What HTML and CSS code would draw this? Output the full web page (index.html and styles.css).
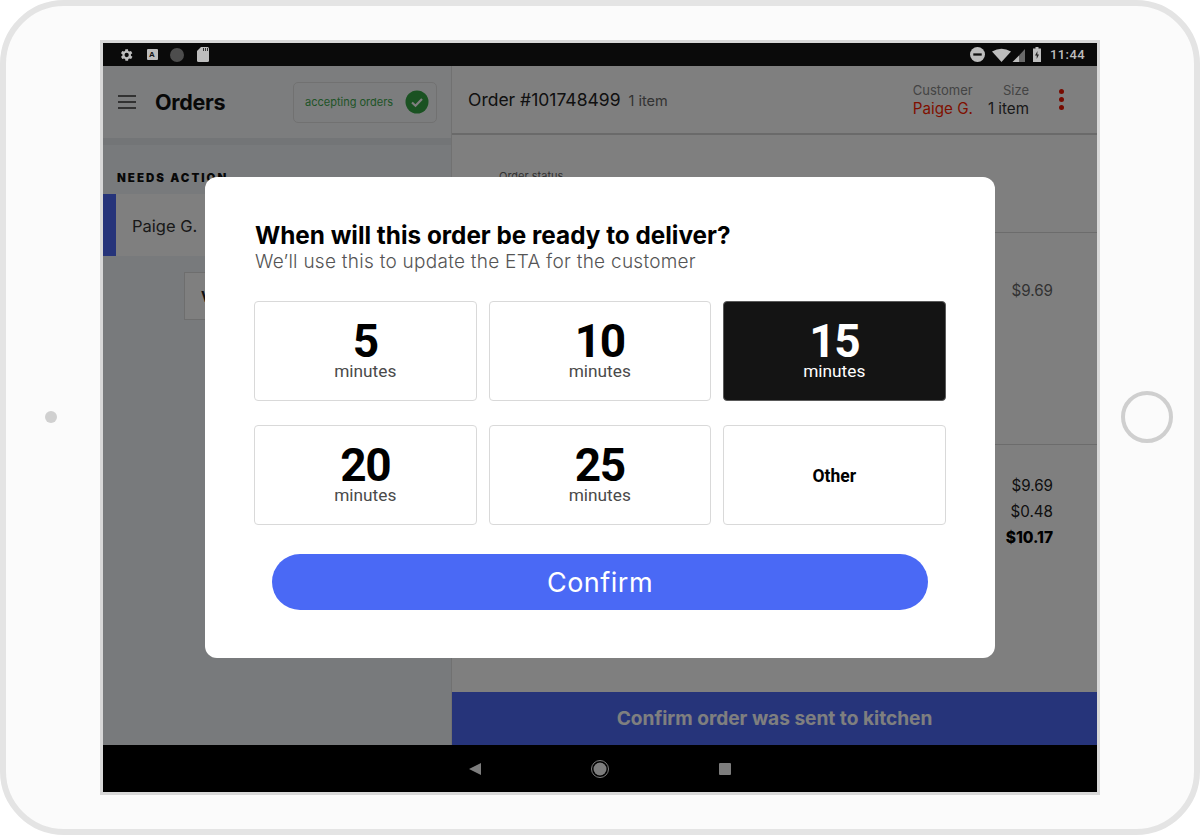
FILE: index.html
```html
<!DOCTYPE html>
<html lang="en">
<head>
<meta charset="utf-8">
<title>Orders</title>
<link rel="stylesheet" href="styles.css">
</head>
<body>
<div class="device">
  <div class="bezel"><span class="camera"></span></div>
  <div class="screen">
    <div class="statusbar">
      <div class="status-left">
        <svg class="si" width="16" height="16" viewBox="0 0 24 24"><path fill="#bdbdbd" d="M19.4 13a7.5 7.5 0 0 0 0-2l2.1-1.6-2-3.5-2.5 1a7.5 7.5 0 0 0-1.7-1L15 3.300h-4l-.4 2.600a7.500 7.500 0 0 0-1.700 1l-2.500-1-2 3.500L6.600 11a7.500 7.500 0 0 0 0 2l-2.100 1.600 2 3.500 2.500-1a7.500 7.500 0 0 0 1.700 1l.4 2.600h4l.4-2.600a7.500 7.500 0 0 0 1.700-1l2.500 1 2-3.500zM13 15.200a3.200 3.200 0 1 1 0-6.400 3.200 3.200 0 0 1 0 6.400z"/></svg>
        <span class="a-icon">A</span>
        <span class="dot-icon"></span>
        <svg class="si" width="12" height="15" viewBox="0 0 12 15"><path fill="#bdbdbd" d="M4 0h6.500A1.500 1.500 0 0 1 12 1.500v12a1.500 1.500 0 0 1-1.500 1.500h-9A1.500 1.500 0 0 1 0 13.500V4z"/><path fill="#333" d="M6 1h1v3H6zM8 1h1v3H8zM10 1h1v3h-1z"/></svg>
      </div>
      <div class="status-right">
        <svg width="15" height="15" viewBox="0 0 16 16"><circle cx="8" cy="8" r="8" fill="#bdbdbd"/><rect x="3.500" y="6.800" width="9" height="2.400" fill="#111"/></svg>
        <svg width="33" height="14" viewBox="0 0 33 14"><path fill="#bdbdbd" d="M0 3.500Q9.500-2 19 3.500L9.500 14z"/><path fill="#bdbdbd" d="M27 7.500V14H20.500z"/><path fill="#6a6a6a" d="M33 1v13h-6V7.500z"/></svg>
        <svg class="battery" width="8" height="15" viewBox="0 0 8 15"><path fill="#bdbdbd" d="M2.500 0h3v1.500H8V15H0V1.500h2.500z"/><path fill="#222" d="M4.500 4 2 8.500h1.700V12L6 7.500H4.300z"/></svg>
        <span class="clock">11:44</span>
      </div>
    </div>
    <div class="app">
      <aside class="side">
        <div class="side-head">
          <svg class="menu" width="18" height="14" viewBox="0 0 18 14"><path d="M0 1h18M0 7h18M0 13h18" stroke="#333" stroke-width="1.500"/></svg>
          <h1 class="orders">Orders</h1>
          <div class="accepting">
            <span class="accepting-text">accepting orders</span>
            <svg width="24" height="24" viewBox="0 0 24 24"><circle cx="12" cy="12" r="11.500" fill="#34a544"/><path d="M7 12.500l3.500 3.200L17 9" fill="none" stroke="#fff" stroke-width="2.200"/></svg>
          </div>
        </div>
        <div class="side-rule"></div>
        <div class="section-label">NEEDS ACTION</div>
        <div class="order-row">Paige G.</div>
        <div class="view-btn">View</div>
      </aside>
      <main class="detail">
        <header class="detail-head">
          <div class="order-title"><span class="order-no">Order #101748499</span><span class="order-count">1 item</span></div>
          <div class="meta">
            <div class="meta-col"><span class="meta-label">Customer</span><span class="meta-name">Paige G.</span></div>
            <div class="meta-col meta-end"><span class="meta-label">Size</span><span class="meta-value">1 item</span></div>
          </div>
          <div class="kebab"><i></i><i></i><i></i></div>
        </header>
        <div class="detail-body">
          <div class="status-label">Order status</div>
          <div class="line-row line-first"><span>$9.69</span></div>
          <div class="totals">
            <span>$9.69</span>
            <span>$0.48</span>
            <strong>$10.17</strong>
          </div>
        </div>
        <div class="confirm-bar">Confirm order was sent to kitchen</div>
      </main>
      <div class="scrim"></div>
      <section class="modal">
        <h2 class="modal-title">When will this order be ready to deliver?</h2>
        <p class="modal-sub">We’ll use this to update the ETA for the customer</p>
        <div class="choices">
          <button class="choice"><b>5</b><span>minutes</span></button>
          <button class="choice"><b>10</b><span>minutes</span></button>
          <button class="choice selected"><b>15</b><span>minutes</span></button>
          <button class="choice"><b>20</b><span>minutes</span></button>
          <button class="choice"><b>25</b><span>minutes</span></button>
          <button class="choice other">Other</button>
        </div>
        <button class="confirm">Confirm</button>
      </section>
    </div>
    <div class="navbar">
      <svg width="12" height="12" viewBox="0 0 12 12"><path fill="#7d7d7d" d="M12 0v12L0 6z"/></svg>
      <svg width="18" height="18" viewBox="0 0 18 18"><circle cx="9" cy="9" r="8.500" fill="none" stroke="#7d7d7d"/><circle cx="9" cy="9" r="6.500" fill="#7d7d7d"/></svg>
      <span class="nav-square"></span>
    </div>
  </div>
  <div class="bezel"><span class="home"></span></div>
</div>
</body>
</html>
```
FILE: styles.css
```css
* { box-sizing: border-box; }
html, body { margin: 0; padding: 0; }
body { width: 1200px; height: 835px; overflow: hidden; background: #fff; font-family: "Inter", "Liberation Sans", sans-serif; }
.device { width: 1200px; height: 835px; background: #fbfbfb; border: 6px solid #e4e4e4; border-radius: 64px; display: flex; align-items: center; }
.bezel { flex: 1; display: flex; align-items: center; justify-content: center; }
.camera { width: 12px; height: 12px; border-radius: 50%; background: #d0d0d0; margin: 0 4px 1px 0; }
.home { width: 52px; height: 52px; border-radius: 50%; border: 4px solid #cfcfcf; margin-bottom: 1px; }
.screen { width: 1000px; height: 755px; border: 3px solid #d8d8d8; display: flex; flex-direction: column; background: #000; }
.statusbar { height: 23px; background: #0a0a0a; display: flex; justify-content: space-between; align-items: center; padding: 0 12px 0 15px; flex: none; }
.status-left { display: flex; align-items: center; gap: 12.500px; }
.status-right { display: flex; align-items: center; gap: 7px; }
.battery { margin: 0 2px 0 1px; }
.a-icon { width: 11px; height: 11px; background: #bdbdbd; color: #111; font: bold 8px/11px "Liberation Sans", sans-serif; text-align: center; border-radius: 1px; }
.dot-icon { width: 14px; height: 14px; border-radius: 50%; background: #4d4d4d; }
.clock { color: #bdbdbd; font: 500 13px "Roboto", sans-serif; letter-spacing: .4px; }
.app { position: relative; flex: 1; display: flex; background: #fff; min-height: 0; }
.scrim { position: absolute; inset: 0; background: rgba(0,0,0,.5); }
.side { width: 349px; flex: none; background: #f1f5f9; border-right: 1px solid #e2e2e2; }
.side-head { height: 72px; display: flex; align-items: center; padding-left: 15px; background: #f8fafc; }
.menu { flex: none; }
.orders { margin: 0 0 0 19px; font-size: 21.500px; font-weight: 700; color: #111; width: 138px; letter-spacing: -.3px; }
.accepting { width: 144px; height: 41px; border: 1px solid #e3e3e3; border-radius: 5px; display: flex; align-items: center; justify-content: space-between; padding: 0 7px 0 11px; }
.accepting-text { font-size: 11px; color: #3fa94e; }
.side-rule { height: 7px; background: #e6eaee; }
.section-label { margin: 25px 0 0 14px; height: 24px; padding-top: 1px; font-size: 11.500px; font-weight: 900; letter-spacing: 2px; color: #111; }
.order-row { height: 62px; border-left: 13px solid #4c68f5; background: #fff; padding: 2px 0 0 16px; display: flex; align-items: center; font-size: 16.500px; color: #333; }
.view-btn { margin: 16px 0 0 81px; width: 100px; height: 48px; background: #fff; border: 1px solid #ddd; padding: 15px 0 0 16px; font-weight: 700; font-size: 14px; color: #222; }
.detail { flex: 1; display: flex; flex-direction: column; background: #fff; min-width: 0; }
.detail-head { height: 69px; flex: none; display: flex; align-items: center; padding: 0 33px 0 16px; border-bottom: 2px solid #d4d4d4; }
.order-title { flex: 1; display: flex; align-items: baseline; gap: 8px; }
.order-no { font-size: 17.500px; color: #222; }
.order-count { font-size: 14.500px; color: #666; }
.meta { display: flex; gap: 15px; margin-right: 30px; }
.meta-col { display: flex; flex-direction: column; gap: 1px; }
.meta-end { align-items: flex-end; }
.meta-label { font-size: 13px; color: #888; }
.meta-name { font-size: 15.200px; color: #ff1e00; }
.meta-value { font-size: 15.200px; color: #333; }
.kebab { display: flex; flex-direction: column; gap: 3px; }
.kebab i { width: 5px; height: 5px; border-radius: 50%; background: #ee1600; }
.detail-body { flex: 1; position: relative; padding: 34px 44px 0 47px; display: flex; flex-direction: column; min-height: 0; }
.status-label { font-size: 11px; color: #666; height: 63px; }
.line-row { margin-right: -44px; margin-left: -15px; padding-right: 44px; border-top: 1px solid #d8d8d8; height: 212px; padding-top: 48px; display: flex; justify-content: flex-end; font-size: 15.200px; color: #666; }
.totals { margin: 0 -44px 0 -15px; padding: 31px 44px 0 0; border-top: 1px solid #d8d8d8; display: flex; flex-direction: column; align-items: flex-end; font-size: 15.200px; color: #222; gap: 7px; }
.totals strong { font-size: 15.500px; font-weight: 800; color: #000; margin-top: 0; }
.confirm-bar { height: 53px; flex: none; background: #4c68f5; color: #fff; display: flex; align-items: center; justify-content: center; padding-bottom: 2px; font-size: 19.100px; font-weight: 700; }
.modal { position: absolute; left: 102px; top: 111px; width: 790px; height: 481px; background: #fff; border-radius: 12px; padding: 44px 49px 0 49px; }
.modal-title { margin: 0; font-size: 24.300px; line-height: 29px; font-weight: 700; color: #000; padding-left: 1px; }
.modal-sub { margin: 0; font-size: 19px; line-height: 24px; font-weight: 300; letter-spacing: .27px; color: #555; padding-left: 1px; }
.choices { margin-top: 27px; display: grid; grid-template-columns: repeat(3, 222.500px); grid-auto-rows: 100px; gap: 24px 12px; }
.choice { background: #fff; border: 1px solid #d9d9d9; border-radius: 4px; display: flex; flex-direction: column; align-items: center; justify-content: center; font-family: "Roboto", sans-serif; color: #000; padding: 0 0 4px; }
.choice b { font-size: 46px; line-height: 44px; font-weight: 700; letter-spacing: -1.500px; }
.choice span { font-size: 17.300px; line-height: 18px; color: #4a4a4a; margin-top: -1px; }
.choice.selected { background: #141414; border-color: #5a5a5a; color: #fff; }
.choice.selected span { color: #fff; }
.choice.other { font-size: 17.500px; font-weight: 700; padding: 2px 0 0; }
.confirm { display: block; margin: 29px 0 0 18px; width: 656px; height: 56px; border: 0; border-radius: 28px; background: #4a69f5; color: #fff; font-family: "Inter", sans-serif; font-size: 27px; letter-spacing: .5px; }
.navbar { height: 47px; flex: none; background: #000; display: flex; align-items: center; justify-content: center; gap: 110px; }
.nav-square { width: 12px; height: 12px; background: #7d7d7d; border-radius: 1px; }
```
